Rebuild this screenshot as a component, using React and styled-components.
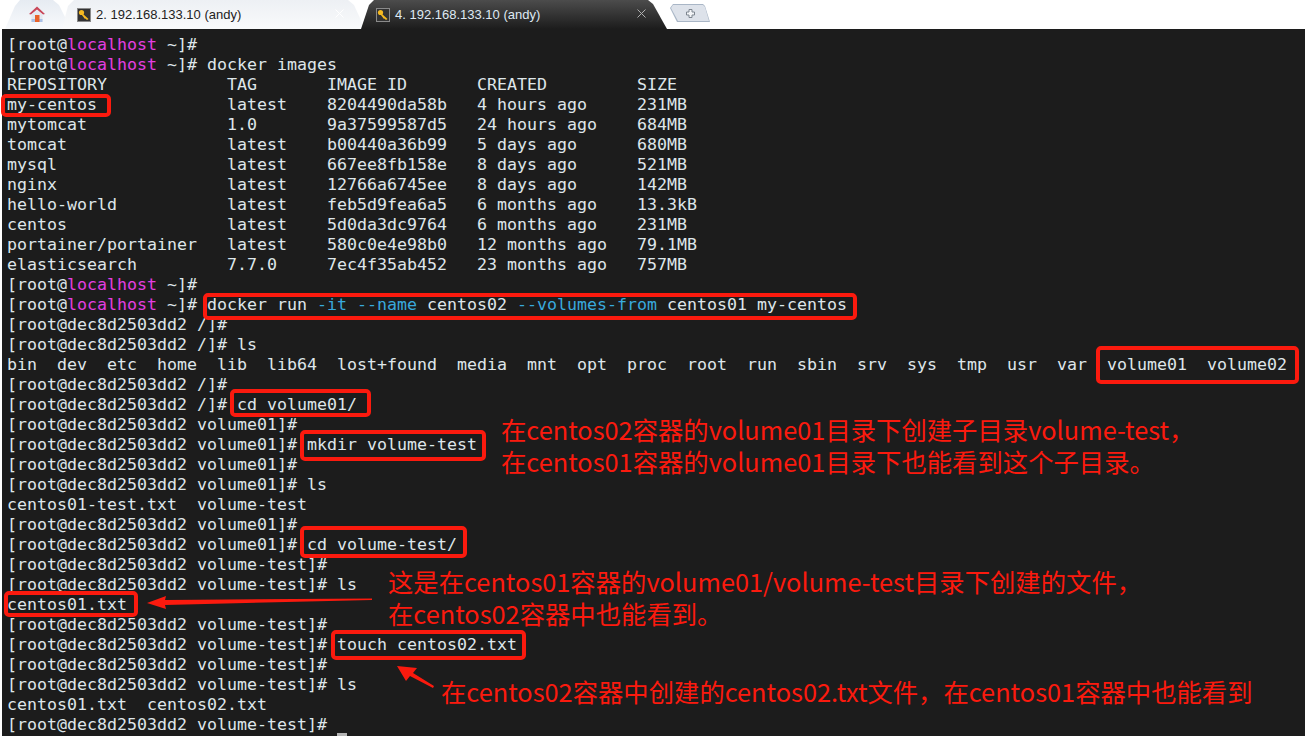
import React from 'react'
import styled, { createGlobalStyle } from 'styled-components'

const GlobalStyle = createGlobalStyle`
* { box-sizing: border-box; }
html, body { margin: 0; padding: 0; background: #fff; overflow: hidden; }
`

const M = ({ children }) => <Host>{children}</Host>
const C = ({ children }) => <Flag>{children}</Flag>

const local = <>[root@<M>localhost</M> ~]#</>

const imageRows = [
  ['REPOSITORY', 'TAG', 'IMAGE ID', 'CREATED', 'SIZE'],
  ['my-centos', 'latest', '8204490da58b', '4 hours ago', '231MB'],
  ['mytomcat', '1.0', '9a37599587d5', '24 hours ago', '684MB'],
  ['tomcat', 'latest', 'b00440a36b99', '5 days ago', '680MB'],
  ['mysql', 'latest', '667ee8fb158e', '8 days ago', '521MB'],
  ['nginx', 'latest', '12766a6745ee', '8 days ago', '142MB'],
  ['hello-world', 'latest', 'feb5d9fea6a5', '6 months ago', '13.3kB'],
  ['centos', 'latest', '5d0da3dc9764', '6 months ago', '231MB'],
  ['portainer/portainer', 'latest', '580c0e4e98b0', '12 months ago', '79.1MB'],
  ['elasticsearch', '7.7.0', '7ec4f35ab452', '23 months ago', '757MB'],
]

const imageLine = (r) =>
  r[0].padEnd(22) + r[1].padEnd(10) + r[2].padEnd(15) + r[3].padEnd(16) + r[4]

const redBoxes = [
  { x: 1, y: 94, w: 110, h: 23 },
  { x: 203, y: 293, w: 654, h: 27 },
  { x: 1096, y: 346, w: 203, h: 38 },
  { x: 230, y: 389, w: 141, h: 28 },
  { x: 300, y: 430, w: 186, h: 31 },
  { x: 300, y: 526, w: 167, h: 32 },
  { x: 4, y: 591, w: 134, h: 26 },
  { x: 331, y: 630, w: 195, h: 30 },
]

const notes = [
  { x: 501, y: 413, text: '在centos02容器的volume01目录下创建子目录volume-test，\n在centos01容器的volume01目录下也能看到这个子目录。' },
  { x: 388, y: 565, text: '这是在centos01容器的volume01/volume-test目录下创建的文件，\n在centos02容器中也能看到。' },
  { x: 441, y: 675, text: '在centos02容器中创建的centos02.txt文件，在centos01容器中也能看到' },
]

const HomeIcon = () => (
  <svg width="18" height="18" viewBox="0 0 18 18">
    <path d="M1 9 L9 1.5 L17 9 L15 9.5 L9 4.5 L3 9.5 Z" fill="#c9485a" />
    <path d="M3.5 9.5 L9 5 L14.5 9.5 V17 H3.5 Z" fill="#e4e8f0" />
    <rect x="3.5" y="14" width="11" height="3" fill="#a9c0e6" />
    <rect x="7" y="10" width="4.5" height="7" fill="#e8622a" />
  </svg>
)

const KeyIcon = () => (
  <KeyFrame>
    <svg width="12" height="12" viewBox="0 0 12 12">
      <circle cx="3.5" cy="3.5" r="2.6" fill="#f5b921" />
      <path d="M4.5 4.5 L10.5 10 L9 11 L7.5 9.5 L7 10 L3.5 5.5 Z" fill="#f5b921" />
    </svg>
  </KeyFrame>
)

const CloseIcon = ({ color }) => (
  <svg width="9" height="9" viewBox="0 0 9 9">
    <path d="M.5 .5 L8.5 8.5 M8.5 .5 L.5 8.5" stroke={color} fill="none" />
  </svg>
)

const App = () => {
  return (
    <Page>
      <GlobalStyle />
      <TabBar>
        <HomeTab><HomeIcon /></HomeTab>
        <LightTab>
          <KeyIcon />
          <TabLabel>2. 192.168.133.10 (andy)</TabLabel>
          <Close><CloseIcon color="#fff" /></Close>
        </LightTab>
        <DarkTab>
          <KeyIcon />
          <TabLabel $dark>4. 192.168.133.10 (andy)</TabLabel>
          <Close><CloseIcon color="#b0b0b0" /></Close>
        </DarkTab>
        <NewTab>
          <svg width="9" height="9" viewBox="0 0 9 9">
            <path d="M3 .5 H6 V3 H8.5 V6 H6 V8.5 H3 V6 H.5 V3 H3 Z" fill="#f3f5f8" stroke="#7d858f" />
          </svg>
        </NewTab>
      </TabBar>
      <Terminal>
        <Line>{local}</Line>
        <Line>{local} docker images</Line>
        {imageRows.map((r) => <Line key={r[0]}>{imageLine(r)}</Line>)}
        <Line>{local}</Line>
        <Line>{local} docker run <C>-it</C> <C>--name</C> centos02 <C>--volumes-from</C> centos01 my-centos</Line>
        <Line>[root@dec8d2503dd2 /]#</Line>
        <Line>[root@dec8d2503dd2 /]# ls</Line>
        <Line>bin  dev  etc  home  lib  lib64  lost+found  media  mnt  opt  proc  root  run  sbin  srv  sys  tmp  usr  var  volume01  volume02</Line>
        <Line>[root@dec8d2503dd2 /]#</Line>
        <Line>[root@dec8d2503dd2 /]# cd volume01/</Line>
        <Line>[root@dec8d2503dd2 volume01]#</Line>
        <Line>[root@dec8d2503dd2 volume01]# mkdir volume-test</Line>
        <Line>[root@dec8d2503dd2 volume01]#</Line>
        <Line>[root@dec8d2503dd2 volume01]# ls</Line>
        <Line>centos01-test.txt  volume-test</Line>
        <Line>[root@dec8d2503dd2 volume01]#</Line>
        <Line>[root@dec8d2503dd2 volume01]# cd volume-test/</Line>
        <Line>[root@dec8d2503dd2 volume-test]#</Line>
        <Line>[root@dec8d2503dd2 volume-test]# ls</Line>
        <Line>centos01.txt</Line>
        <Line>[root@dec8d2503dd2 volume-test]#</Line>
        <Line>[root@dec8d2503dd2 volume-test]# touch centos02.txt</Line>
        <Line>[root@dec8d2503dd2 volume-test]#</Line>
        <Line>[root@dec8d2503dd2 volume-test]# ls</Line>
        <Line>centos01.txt  centos02.txt</Line>
        <Line>[root@dec8d2503dd2 volume-test]#</Line>
        <Cursor />
      </Terminal>
      {redBoxes.map((b) => (
        <RedBox key={b.y} style={{ left: b.x, top: b.y, width: b.w, height: b.h }} />
      ))}
      {notes.map((n) => (
        <Note key={n.y} style={{ left: n.x, top: n.y }}>{n.text}</Note>
      ))}
      <Arrows width="1305" height="736" viewBox="0 0 1305 736">
        <path d="M372 598.5 L165 600 L166 596 L147 603 L166 609 L165 605 L372 600 Z" fill="#fb1a0e" />
        <path d="M397 666 L417 668 L413 673 L434 686 L433 688 L410 676 L406 681 Z" fill="#fb1a0e" />
      </Arrows>
    </Page>
  )
}

export default App

const Page = styled.div`
position: relative;
width: 1305px;
height: 736px;
overflow: hidden;
background: #fff;
display: flex;
flex-direction: column;
`
const TabBar = styled.div`
height: 29px;
flex: none;
display: flex;
align-items: stretch;
padding-left: 5px;
background: #fff;
`
const HomeTab = styled.div`
width: 66px;
display: flex;
align-items: center;
justify-content: center;
padding: 0 2px 2px 0;
background: linear-gradient(#e6ebf2, #f8fafc);
clip-path: polygon(0 100%, 10px 6px, 15px 0, 48px 0, 54px 5px, 66px 100%);
`
const LightTab = styled.div`
width: 303px;
margin-left: -9px;
padding-left: 15px;
display: flex;
align-items: center;
background: linear-gradient(#edf0f4, #f9fafb);
clip-path: polygon(0 100%, 6px 6px, 12px 0, 286px 0, 292px 5px, 303px 100%);
`
const DarkTab = styled.div`
width: 306px;
margin-left: -4px;
padding-left: 15px;
display: flex;
align-items: center;
background: linear-gradient(#4c4c4c, #1c1c1c);
clip-path: polygon(0 100%, 8px 5px, 13px 0, 287px 0, 292px 4px, 306px 100%);
`
const KeyFrame = styled.span`
width: 14px;
height: 14px;
flex: none;
display: flex;
align-items: center;
justify-content: center;
background: #333;
border: 1px solid #8a8a8a;
`
const TabLabel = styled.span`
margin-left: 5px;
padding-bottom: 1px;
font-family: "Liberation Sans", Arial, sans-serif;
font-size: 13px;
white-space: pre;
color: ${(p) => (p.$dark ? '#dfe9f3' : '#222')};
flex: 1;
`
const Close = styled.span`
width: 30px;
height: 11px;
margin-bottom: 3px;
display: flex;
align-items: center;
`
const NewTab = styled.div`
position: relative;
width: 40px;
height: 18px;
margin: 4px 0 0 3px;
display: flex;
align-items: center;
justify-content: center;
background: #a9b6c6;
clip-path: polygon(0 4px, 3px 0, 33px 0, 35px 2px, 40px 100%, 7px 100%);
&::before {
  content: '';
  position: absolute;
  inset: 1px;
  background: #dde2ea;
  clip-path: polygon(0 3px, 2px 0, 32px 0, 34px 2px, 38px 100%, 7px 100%);
}
svg { position: relative; }
`
const Terminal = styled.div`
position: relative;
flex: 1;
margin-left: 2px;
padding: 5px 0 0 5px;
background: #1c1c1c;
overflow: hidden;
`
const Line = styled.div`
height: 20px;
font-family: "DejaVu Sans Mono", monospace;
font-size: 16.62px;
line-height: 22px;
white-space: pre;
color: #dfe6ea;
`
const Host = styled.span`
color: #e33fe0;
`
const Flag = styled.span`
color: #39a9dc;
`
const Cursor = styled.div`
position: absolute;
left: 335px;
bottom: 0;
width: 10px;
height: 3px;
background: #b4b4b4;
`
const RedBox = styled.div`
position: absolute;
border: 4px solid #fb1a0e;
border-radius: 5px;
`
const Note = styled.div`
position: absolute;
line-height: 32px;
font-family: "Noto Sans CJK SC", "Noto Sans", sans-serif;
font-size: 25.35px;
white-space: pre;
color: #fb1a0e;
`
const Arrows = styled.svg`
position: absolute;
left: 0;
top: 0;
pointer-events: none;
`
